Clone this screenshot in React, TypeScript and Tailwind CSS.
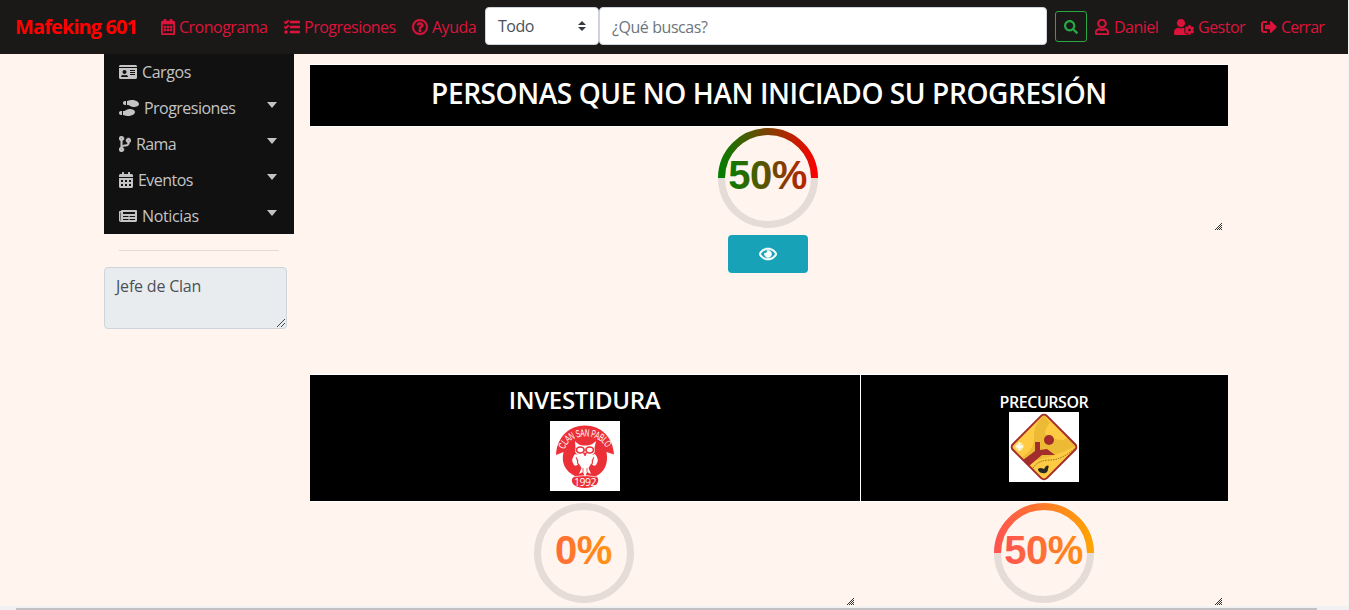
import React from 'react';
import {
  FaCalendarAlt,
  FaCodeBranch,
  FaIdCard,
  FaNewspaper,
  FaRegCalendarAlt,
  FaRegEye,
  FaRegQuestionCircle,
  FaRegUser,
  FaSearch,
  FaShoePrints,
  FaSignOutAlt,
  FaTasks,
  FaUserCog,
} from 'react-icons/fa';

function NavLink({ icon, label, className }: { icon: React.ReactNode; label: string; className: string }) {
  return (
    <a className={`flex shrink-0 items-center gap-1 whitespace-nowrap text-[#dc143c] ${className}`}>
      {icon}
      <span>{label}</span>
    </a>
  );
}

function MenuRow({ icon, label, caret = true, className = 'tracking-[-0.43px]' }: { icon: React.ReactNode; label: string; caret?: boolean; className?: string }) {
  return (
    <li className="flex h-9 items-center pr-[17px] pl-[15px] text-[#c4c4c4]">
      {icon}
      <span className={`ml-[5px] ${className}`}>{label}</span>
      {caret && <span className="mb-[6px] ml-auto h-0 w-0 border-x-[5px] border-t-[6px] border-x-transparent border-t-[#c4c4c4]" />}
    </li>
  );
}

interface GaugeProps {
  id: string;
  value: number;
  from: string;
  to: string;
  textStart?: number;
}

function Gauge({ id, value, from, to, textStart = 8 }: GaugeProps) {
  return (
    <svg className="block h-[100px] w-[100px]" viewBox="0 0 100 100">
      <defs>
        <linearGradient id={id} gradientUnits="userSpaceOnUse" x1="0" y1="0" x2="100" y2="0">
          <stop offset="0" stopColor={from} />
          <stop offset="1" stopColor={to} />
        </linearGradient>
        <linearGradient id={`${id}-text`} gradientUnits="userSpaceOnUse" x1={textStart} y1="0" x2={textStart + 110} y2="0">
          <stop offset="0" stopColor={from} />
          <stop offset="1" stopColor={to} />
        </linearGradient>
      </defs>
      <circle cx="50" cy="50" r="46.5" fill="none" stroke="#e5dcd8" strokeWidth="7" />
      {value > 0 && <path d="M3.5 50a46.5 46.5 0 0 1 93 0" fill="none" stroke={`url(#${id})`} strokeWidth="7" />}
      <text x="49.5" y="61" textAnchor="middle" fontFamily="'Liberation Sans', sans-serif" fontWeight="700" fontSize="40" fill={`url(#${id}-text)`}>
        {value}%
      </text>
    </svg>
  );
}

function Grip({ className = '' }: { className?: string }) {
  const dots: React.ReactNode[] = [];
  for (let y = 0; y < 7; y++) {
    for (let x = 0; x < 7; x++) {
      if (x + y >= 6 && (x + y) % 2 === 0) dots.push(<rect key={`${x}-${y}`} x={x} y={y} width="1" height="1" />);
    }
  }
  return (
    <svg className={`absolute h-[7px] w-[7px] fill-[#333] ${className}`} viewBox="0 0 7 7" shapeRendering="crispEdges">
      {dots}
    </svg>
  );
}

function OwlBadge() {
  return (
    <svg className="block h-[70px] w-[70px] bg-white" viewBox="0 0 70 70">
      <path d="M6 34C7 16 19 4.500 35 4.500S63 16 64 33.500L56.500 31C59 44 53 52 46 55C49 57 49 61 46 64C40 68 29 68 24 64C21 61 21 57 25 55C15 50 11 42 13.500 31Z" fill="#ec3038" />
      <path id="badge-arc" d="M14.500 28.500C20 11 50 11 57 28.500" fill="none" />
      <text fill="#fff" fontFamily="'Liberation Sans', sans-serif" fontSize="10.500">
        <textPath href="#badge-arc" textLength="51" lengthAdjust="spacingAndGlyphs">CLAN SAN PABLO</textPath>
      </text>
      <path d="M25 20Q29 25 35 24.500Q41 25 46 20L44.500 27Q46 32 42 34L45 33Q50 39 46 44Q43 46 41.500 42L38.500 47L41 53L37 51L35 56L33 51L29 53L31.500 47L28.500 42Q27 46 24 44Q20 39 25 33L28 34Q24 32 25.500 27Z" fill="#fff" />
      <g fill="#fff" stroke="#ec3038" strokeWidth="1.700">
        <ellipse cx="30.300" cy="29" rx="3.800" ry="3" />
        <ellipse cx="39.700" cy="29" rx="3.800" ry="3" />
      </g>
      <path d="M33.500 32h3L35 35zM26 36Q29 40 27.500 43M44 36Q41 40 42.500 43M33 47v4M37 47v4" fill="#ec3038" stroke="#ec3038" strokeWidth=".8" />
      <path d="M22 56Q35 53 48 56" fill="none" stroke="#fff" strokeWidth=".7" />
      <text x="35" y="64.500" textAnchor="middle" fill="#fff" fontFamily="'Open Sans', sans-serif" fontSize="10.500" textLength="22">1992</text>
    </svg>
  );
}

function TrailBadge() {
  return (
    <svg className="block h-[70px] w-[70px] bg-white" viewBox="0 0 70 70">
      <defs>
        <clipPath id="sign"><rect x="11" y="11" width="48" height="48" rx="4" transform="rotate(45 35 35)" /></clipPath>
      </defs>
      <rect x="11" y="11" width="48" height="48" rx="4" transform="rotate(45 35 35)" fill="#ffcb42" />
      <g clipPath="url(#sign)">
        <path d="M35 3Q24 13 25 25T12 46L19 50Q41 47 67 34L57 22Q49 33 38 28Q32 21 43 8Z" fill="#edba35" />
        <path d="M35 4Q43 15 57 21L70 35L53 37Q40 31 38 25Q34 20 43 8Z" fill="#ffcb42" />
        <path d="M34 20Q42 28 54 28L62 24L68 34Q50 42 36 34Z" fill="#edba35" />
        <path d="M14 48L26 39V30H31V38L38 37L46 43L33 43L20 54Z" fill="#a32c2d" />
        <path d="M24 56Q29 48 41 48T66 36" fill="none" stroke="#705522" strokeWidth=".8" strokeDasharray="1.500 1" />
      </g>
      <circle cx="40" cy="28" r="5" fill="#a32c2d" />
      <path d="M29 57Q31 55 35 57L37 54Q41 52 39 57Q39 62 33 61Q29 60 29 57Z" fill="#292825" />
      <circle cx="10.500" cy="34.500" r="4.200" fill="#ffe28a" />
      <path d="M10.500 30Q8.500 32 10 34Q7 32 6.500 35L9.500 36V38.500H11.500V36L14.500 35Q14 32 11 34Q12.500 32 10.500 30Z" fill="#fff" />
      <rect x="11" y="11" width="48" height="48" rx="4" transform="rotate(45 35 35)" fill="none" stroke="#a32c2d" strokeWidth="2" />
    </svg>
  );
}

export default function App() {
  return (
    <div className="relative flex h-[610px] w-[1349px] flex-col overflow-hidden border-r border-[#f1f1f1] bg-[#fff4ee] font-['Open_Sans',sans-serif] text-base leading-6 tracking-[-0.5px]">
      <header className="flex h-[54px] w-full shrink-0 items-center bg-[#1a1917] pl-[15px]">
        <a className="w-[146px] text-xl font-bold tracking-[-0.9px] whitespace-nowrap text-[#f00]">Mafeking 601</a>
        <NavLink className="w-[123px]" icon={<FaRegCalendarAlt className="h-4 w-[14px] stroke-current stroke-[20px]" />} label="Cronograma" />
        <NavLink className="w-[128px]" icon={<FaTasks className="h-4 w-4 stroke-current stroke-[20px]" />} label="Progresiones" />
        <NavLink className="w-[73px]" icon={<FaRegQuestionCircle className="h-4 w-4 overflow-visible stroke-current stroke-[20px]" />} label="Ayuda" />
        <div className="mb-[2px] flex h-[38px] w-[114px] shrink-0 items-center justify-between rounded border border-[#ced4da] bg-white pr-3 pl-3 text-[#495057]">
          <span>Todo</span>
          <svg className="h-[10px] w-2" viewBox="0 0 8 10"><path d="M4 0l4 4H0zM0 6h8l-4 4z" fill="#343a40" /></svg>
        </div>
        <div className="mr-2 mb-[2px] flex h-[38px] w-[448px] shrink-0 items-center rounded border border-[#ced4da] bg-white pt-[2px] pl-3 tracking-[-0.43px] text-[#6c757d]">¿Qué buscas?</div>
        <button className="mr-2 mb-px flex h-[31px] w-8 shrink-0 items-center justify-center rounded-[3px] border border-[#28a745] text-[#28a745]"><FaSearch className="h-[14px] w-[14px]" /></button>
        <NavLink className="w-[79px]" icon={<FaRegUser className="mr-px h-4 w-[14px] stroke-current stroke-[20px]" />} label="Daniel" />
        <NavLink className="w-[87px]" icon={<FaUserCog className="h-4 w-5 stroke-current stroke-[10px]" />} label="Gestor" />
        <NavLink className="tracking-[-0.75px]" icon={<FaSignOutAlt className="h-4 w-4" />} label="Cerrar" />
      </header>

      <div className="flex min-h-0 flex-1">
        <aside className="ml-[104px] w-[190px] shrink-0">
          <ul className="bg-[#111]">
            <MenuRow icon={<FaIdCard className="h-4 w-[18px]" />} label="Cargos" caret={false} />
            <MenuRow icon={<FaShoePrints className="h-4 w-5" />} label="Progresiones" className="tracking-[-0.53px]" />
            <MenuRow icon={<FaCodeBranch className="h-4 w-3 stroke-current stroke-[16px]" />} label="Rama" className="tracking-[-0.6px]" />
            <MenuRow icon={<FaCalendarAlt className="h-4 w-[14px]" />} label="Eventos" className="tracking-[-0.55px]" />
            <MenuRow icon={<FaNewspaper className="h-4 w-[18px]" />} label="Noticias" className="tracking-[-0.35px]" />
          </ul>
          <hr className="mx-[15px] my-4 border-[#e5dbd6]" />
          <div className="relative h-[62px] w-[183px] rounded border border-[#ced4da] bg-[#e9ecef] px-[11px] py-[6px] tracking-[-0.2px] text-[#495057]">
            Jefe de Clan
            <svg className="absolute right-px bottom-px h-2 w-2" viewBox="0 0 8 8"><path d="M0 8L8 0M4 8L8 4" stroke="#444" strokeWidth="1" /></svg>
          </div>
        </aside>

        <main className="ml-4 w-[918px] shrink-0 pt-[10px]">
          <section className="relative h-[310px]">
            <h1 className="h-[63px] border-y border-white bg-black pt-[11px] text-center text-[28px] leading-[34px] font-semibold tracking-[-0.41px] text-white">PERSONAS QUE NO HAN INICIADO SU PROGRESIÓN</h1>
            <div className="flex flex-col items-center gap-[7px] pt-px pr-[2px]">
              <Gauge id="start-gauge" value={50} from="#008000" to="#ff0000" />
              <button className="flex h-[38px] w-20 items-center justify-center rounded bg-[#17a2b8] text-white"><FaRegEye className="h-4 w-[18px] stroke-current stroke-[20px]" /></button>
            </div>
            <Grip className="top-[159px] right-[6px]" />
          </section>

          <section className="flex">
            <article className="relative w-[550px]">
              <div className="flex h-32 flex-col items-center border-y border-white bg-black pt-3">
                <h2 className="mr-px mb-[6px] -mt-px pb-px text-2xl leading-7 font-semibold tracking-[-0.35px] text-white">INVESTIDURA</h2>
                <OwlBadge />
              </div>
              <div className="flex justify-center pt-px pr-[2px]"><Gauge id="promise-gauge" value={0} from="#ff5252" to="#ffa500" textStart={-12} /></div>
              <Grip className="top-[224px] right-[6px]" />
            </article>
            <article className="relative w-[368px]">
              <div className="flex h-32 flex-col items-center border-y border-l border-white bg-black pt-[18px] pr-px">
                <h2 className="text-base leading-[19px] font-semibold tracking-[-0.45px] text-white">PRECURSOR</h2>
                <TrailBadge />
              </div>
              <div className="flex justify-center pt-px pr-px"><Gauge id="scout-gauge" value={50} from="#ff5252" to="#ffa500" /></div>
              <Grip className="top-[224px] right-[6px]" />
            </article>
          </section>
        </main>
      </div>
      <div className="absolute inset-x-0 bottom-0 h-1 bg-[#f1f1f1] pt-[2px]">
        <div className="ml-4 h-[2px] w-[1301px] bg-[#c1c1c1]" />
      </div>
    </div>
  );
}
